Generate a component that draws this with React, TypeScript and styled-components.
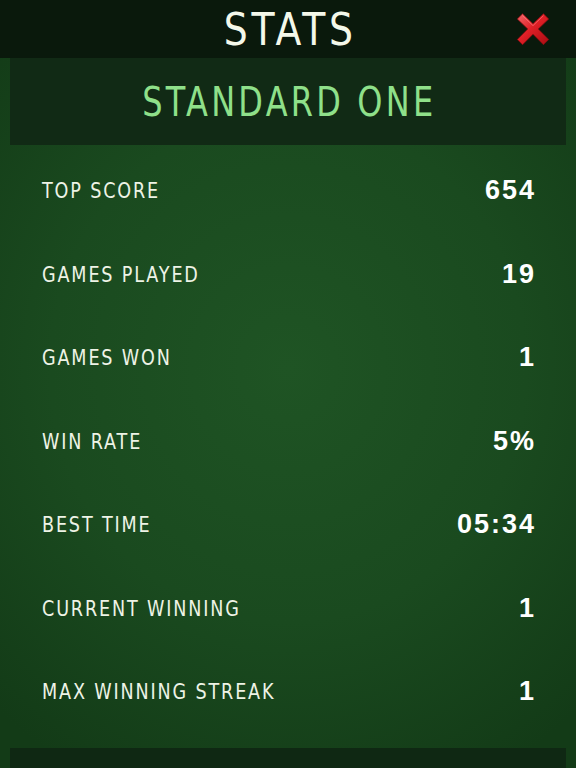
import styled, { createGlobalStyle } from 'styled-components'

const GlobalStyle = createGlobalStyle`
  html, body {
    margin: 0;
    padding: 0;
    background: #0b1a0d;
  }
`

const Screen = styled.div`
  width: 576px;
  height: 768px;
  overflow: hidden;
  display: flex;
  flex-direction: column;
  background: radial-gradient(ellipse 75% 60% at 50% 48%, #1f5424 0%, #1a4a1f 55%, #133b17 100%);
  font-family: 'DejaVu Sans', sans-serif;
`

const Header = styled.header`
  height: 58px;
  flex: none;
  background: #0a190c;
  display: flex;
  align-items: center;
  justify-content: center;
  position: relative;
`

// the reference uses a condensed face; squeeze DejaVu to match
const Title = styled.h1`
  margin: 0;
  display: inline-block;
  color: #f4f8ea;
  font-size: 45px;
  font-weight: 400;
  letter-spacing: 4.5px;
  padding-left: 4.5px;
  line-height: 1;
  transform: scaleX(0.84);
`

const CloseButton = styled.button`
  position: absolute;
  right: 24px;
  top: 10px;
  width: 38px;
  height: 38px;
  padding: 0;
  border: none;
  background: none;
  cursor: pointer;
`

const Panel = styled.div`
  margin: 0 10px;
  height: 87px;
  flex: none;
  background: #112a15;
  display: flex;
  align-items: center;
  justify-content: center;
`

const Subtitle = styled.h2`
  margin: 0;
  display: inline-block;
  color: #8fe08a;
  font-size: 40px;
  font-weight: 400;
  letter-spacing: 4px;
  padding-left: 4px;
  line-height: 1;
  transform: scaleX(0.8);
`

const List = styled.div`
  display: flex;
  flex-direction: column;
  padding: 4px 42px 0;
`

const Row = styled.div`
  height: 83.5px;
  display: flex;
  align-items: center;
  justify-content: space-between;
`

const Label = styled.span`
  display: inline-block;
  color: #eef3e6;
  font-size: 22px;
  letter-spacing: 2.3px;
  transform: scaleX(0.8);
  transform-origin: left center;
`

const Value = styled.span`
  color: #ffffff;
  font-family: 'Liberation Sans', 'Arial', sans-serif;
  font-size: 27px;
  font-weight: 700;
  letter-spacing: 2px;
  margin-right: -2px;
`

const Footer = styled.div`
  margin: auto 10px 0;
  height: 20px;
  flex: none;
  background: #0f2813;
`

const stats = [
  { label: 'TOP SCORE', value: '654' },
  { label: 'GAMES PLAYED', value: '19' },
  { label: 'GAMES WON', value: '1' },
  { label: 'WIN RATE', value: '5%' },
  { label: 'BEST TIME', value: '05:34' },
  { label: 'CURRENT WINNING', value: '1' },
  { label: 'MAX WINNING STREAK', value: '1' },
]

const CloseIcon = () => (
  <svg width="38" height="38" viewBox="0 0 40 40">
    <defs>
      <linearGradient id="xg" x1="0" y1="0" x2="1" y2="1">
        <stop offset="0" stopColor="#f4676a" />
        <stop offset="0.45" stopColor="#e02027" />
        <stop offset="1" stopColor="#a80c12" />
      </linearGradient>
    </defs>
    <path
      d="M9 4 L20 14.5 L31 4 L36.5 9.5 L25.5 20 L36.5 31 L31 36.5 L20 25.5 L9 36.5 L3.5 31 L14.5 20 L3.5 9.5 Z"
      fill="url(#xg)"
      stroke="#8a0a0e"
      strokeWidth="0.8"
      strokeLinejoin="round"
    />
    <path d="M9 6 L20 16.5 L31 6" fill="none" stroke="#ff9a9c" strokeOpacity="0.5" strokeWidth="1" />
  </svg>
)

export default function App() {
  return (
    <>
      <GlobalStyle />
      <Screen>
        <Header>
          <Title>STATS</Title>
          <CloseButton aria-label="Close">
            <CloseIcon />
          </CloseButton>
        </Header>
        <Panel>
          <Subtitle>STANDARD ONE</Subtitle>
        </Panel>
        <List>
          {stats.map((s) => (
            <Row key={s.label}>
              <Label>{s.label}</Label>
              <Value>{s.value}</Value>
            </Row>
          ))}
        </List>
        <Footer />
      </Screen>
    </>
  )
}
